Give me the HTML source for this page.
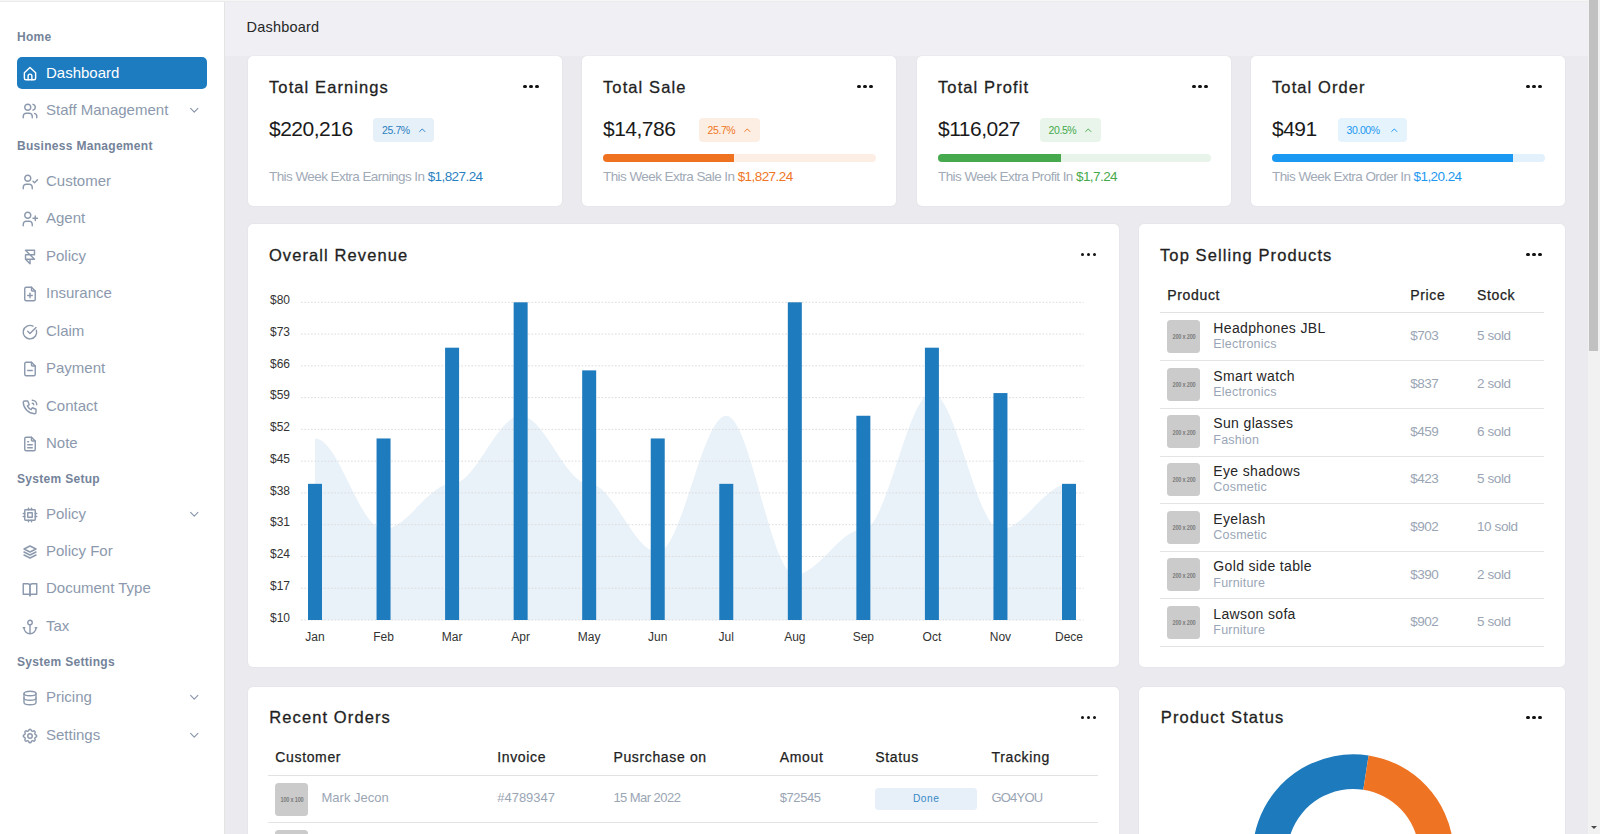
<!DOCTYPE html><html><head><meta charset="utf-8"><style>
html,body{margin:0;padding:0;width:1600px;height:834px;overflow:hidden;background:#eaeaef;font-family:"Liberation Sans",sans-serif;}
.t{position:absolute;white-space:nowrap;}
.b{position:absolute;}
.ic{position:absolute;overflow:visible;}
</style></head><body>
<div class="b" style="left:0px;top:0px;width:225px;height:834px;background:#ffffff;border-radius:0px;border-right:1px solid #e4e4e4;box-sizing:border-box;"></div>
<div class="b" style="left:225px;top:0px;width:1363px;height:56px;background:#efeff4;border-radius:0px;"></div>
<div class="b" style="left:0px;top:0px;width:1588px;height:1px;background:#f6f6f6;border-radius:0px;"></div>
<div class="b" style="left:0px;top:1px;width:1588px;height:1px;background:#ebebeb;border-radius:0px;"></div>
<div class="t" style="left:17px;top:31.30px;font-size:12px;line-height:12px;color:#74839a;font-weight:700;letter-spacing:0.3px;">Home</div>
<div class="b" style="left:17px;top:57.3px;width:190.3px;height:31.3px;background:#1d7bbf;border-radius:5px;"></div>
<svg class="ic" style="left:20.80px;top:64.90px;width:18px;height:18px" viewBox="0 0 24 24" fill="none" stroke="#ffffff" stroke-width="1.9" stroke-linecap="round" stroke-linejoin="round"><g transform="translate(0,-1.3)"><path d="M4.5 11.5L12 4.5l7.5 7v7.5a2 2 0 0 1 -2 2h-11a2 2 0 0 1 -2 -2z"/><path d="M9.5 21v-5a2.5 2.5 0 0 1 5 0v5"/></g></svg>
<div class="t" style="left:46px;top:65.05px;font-size:15px;line-height:15px;color:#ffffff;">Dashboard</div>
<svg class="ic" style="left:20.80px;top:102.10px;width:18px;height:18px" viewBox="0 0 24 24" fill="none" stroke="#8c99ad" stroke-width="1.9" stroke-linecap="round" stroke-linejoin="round"><circle cx="9" cy="7" r="4"/><path d="M3 21v-2a4 4 0 0 1 4 -4h4a4 4 0 0 1 4 4v2"/><path d="M16 3.13a4 4 0 0 1 0 7.75"/><path d="M21 21v-2a4 4 0 0 0 -3 -3.85"/></svg>
<div class="t" style="left:46px;top:102.25px;font-size:15px;line-height:15px;color:#8c99ad;">Staff Management</div>
<svg class="ic" style="left:187.15px;top:103.45px;width:14.5px;height:14.5px" viewBox="0 0 24 24" fill="none" stroke="#8c99ad" stroke-width="2.0" stroke-linecap="round" stroke-linejoin="round"><path d="M6 9l6 6l6 -6"/></svg>
<div class="t" style="left:17px;top:139.80px;font-size:12px;line-height:12px;color:#74839a;font-weight:700;letter-spacing:0.3px;">Business Management</div>
<svg class="ic" style="left:20.80px;top:172.70px;width:18px;height:18px" viewBox="0 0 24 24" fill="none" stroke="#8c99ad" stroke-width="1.9" stroke-linecap="round" stroke-linejoin="round"><circle cx="9" cy="7" r="4"/><path d="M3 21v-2a4 4 0 0 1 4 -4h4a4 4 0 0 1 4 4v2"/><path d="M16 11l2 2l4 -4"/></svg>
<div class="t" style="left:46px;top:172.85px;font-size:15px;line-height:15px;color:#8c99ad;">Customer</div>
<svg class="ic" style="left:20.80px;top:210.10px;width:18px;height:18px" viewBox="0 0 24 24" fill="none" stroke="#8c99ad" stroke-width="1.9" stroke-linecap="round" stroke-linejoin="round"><circle cx="9" cy="7" r="4"/><path d="M3 21v-2a4 4 0 0 1 4 -4h4a4 4 0 0 1 4 4v2"/><path d="M16 11h6m-3 -3v6"/></svg>
<div class="t" style="left:46px;top:210.25px;font-size:15px;line-height:15px;color:#8c99ad;">Agent</div>
<svg class="ic" style="left:20.80px;top:247.60px;width:18px;height:18px" viewBox="0 0 24 24" fill="none" stroke="#8c99ad" stroke-width="1.9" stroke-linecap="round" stroke-linejoin="round"><path d="M6 15h12l-12 -12h12v6h-12v6l6 6v-6"/></svg>
<div class="t" style="left:46px;top:247.75px;font-size:15px;line-height:15px;color:#8c99ad;">Policy</div>
<svg class="ic" style="left:20.80px;top:285.10px;width:18px;height:18px" viewBox="0 0 24 24" fill="none" stroke="#8c99ad" stroke-width="1.9" stroke-linecap="round" stroke-linejoin="round"><path d="M14 3v4a1 1 0 0 0 1 1h4"/><path d="M17 21h-10a2 2 0 0 1 -2 -2v-14a2 2 0 0 1 2 -2h7l5 5v11a2 2 0 0 1 -2 2z"/><path d="M12 11l0 6"/><path d="M9 14l6 0"/></svg>
<div class="t" style="left:46px;top:285.25px;font-size:15px;line-height:15px;color:#8c99ad;">Insurance</div>
<svg class="ic" style="left:20.80px;top:322.60px;width:18px;height:18px" viewBox="0 0 24 24" fill="none" stroke="#8c99ad" stroke-width="1.9" stroke-linecap="round" stroke-linejoin="round"><path d="M20.5 9.5A9 9 0 1 1 16 4.2"/><path d="M9 11l3 3l8 -8"/></svg>
<div class="t" style="left:46px;top:322.75px;font-size:15px;line-height:15px;color:#8c99ad;">Claim</div>
<svg class="ic" style="left:20.80px;top:360.10px;width:18px;height:18px" viewBox="0 0 24 24" fill="none" stroke="#8c99ad" stroke-width="1.9" stroke-linecap="round" stroke-linejoin="round"><path d="M14 3v4a1 1 0 0 0 1 1h4"/><path d="M17 21h-10a2 2 0 0 1 -2 -2v-14a2 2 0 0 1 2 -2h7l5 5v11a2 2 0 0 1 -2 2z"/><path d="M9 14l6 0"/></svg>
<div class="t" style="left:46px;top:360.25px;font-size:15px;line-height:15px;color:#8c99ad;">Payment</div>
<svg class="ic" style="left:20.80px;top:397.60px;width:18px;height:18px" viewBox="0 0 24 24" fill="none" stroke="#8c99ad" stroke-width="1.9" stroke-linecap="round" stroke-linejoin="round"><path d="M5 4h4l2 5l-2.5 1.5a11 11 0 0 0 5 5l1.5 -2.5l5 2v4a2 2 0 0 1 -2 2a16 16 0 0 1 -15 -15a2 2 0 0 1 2 -2"/><path d="M15 7a2 2 0 0 1 2 2"/><path d="M15 3a6 6 0 0 1 6 6"/></svg>
<div class="t" style="left:46px;top:397.75px;font-size:15px;line-height:15px;color:#8c99ad;">Contact</div>
<svg class="ic" style="left:20.80px;top:435.10px;width:18px;height:18px" viewBox="0 0 24 24" fill="none" stroke="#8c99ad" stroke-width="1.9" stroke-linecap="round" stroke-linejoin="round"><path d="M14 3v4a1 1 0 0 0 1 1h4"/><path d="M17 21h-10a2 2 0 0 1 -2 -2v-14a2 2 0 0 1 2 -2h7l5 5v11a2 2 0 0 1 -2 2z"/><path d="M9 9l1 0"/><path d="M9 13l6 0"/><path d="M9 17l6 0"/></svg>
<div class="t" style="left:46px;top:435.25px;font-size:15px;line-height:15px;color:#8c99ad;">Note</div>
<div class="t" style="left:17px;top:473.00px;font-size:12px;line-height:12px;color:#74839a;font-weight:700;letter-spacing:0.3px;">System Setup</div>
<svg class="ic" style="left:20.80px;top:505.50px;width:18px;height:18px" viewBox="0 0 24 24" fill="none" stroke="#8c99ad" stroke-width="1.9" stroke-linecap="round" stroke-linejoin="round"><rect x="5" y="5" width="14" height="14" rx="1"/><path d="M9 9h6v6h-6z"/><path d="M3 10h2"/><path d="M3 14h2"/><path d="M10 3v2"/><path d="M14 3v2"/><path d="M21 10h-2"/><path d="M21 14h-2"/><path d="M14 21v-2"/><path d="M10 21v-2"/></svg>
<div class="t" style="left:46px;top:505.65px;font-size:15px;line-height:15px;color:#8c99ad;">Policy</div>
<svg class="ic" style="left:187.15px;top:506.85px;width:14.5px;height:14.5px" viewBox="0 0 24 24" fill="none" stroke="#8c99ad" stroke-width="2.0" stroke-linecap="round" stroke-linejoin="round"><path d="M6 9l6 6l6 -6"/></svg>
<svg class="ic" style="left:20.80px;top:543.10px;width:18px;height:18px" viewBox="0 0 24 24" fill="none" stroke="#8c99ad" stroke-width="1.9" stroke-linecap="round" stroke-linejoin="round"><path d="M12 4l-8 4l8 4l8 -4l-8 -4"/><path d="M4 12l8 4l8 -4"/><path d="M4 16l8 4l8 -4"/></svg>
<div class="t" style="left:46px;top:543.25px;font-size:15px;line-height:15px;color:#8c99ad;">Policy For</div>
<svg class="ic" style="left:20.80px;top:580.30px;width:18px;height:18px" viewBox="0 0 24 24" fill="none" stroke="#8c99ad" stroke-width="1.9" stroke-linecap="round" stroke-linejoin="round"><path d="M3 5h6a3 3 0 0 1 3 3v13a2 2 0 0 0 -2 -2h-7z"/><path d="M21 5h-6a3 3 0 0 0 -3 3v13a2 2 0 0 1 2 -2h7z"/></svg>
<div class="t" style="left:46px;top:580.45px;font-size:15px;line-height:15px;color:#8c99ad;">Document Type</div>
<svg class="ic" style="left:20.80px;top:618.10px;width:18px;height:18px" viewBox="0 0 24 24" fill="none" stroke="#8c99ad" stroke-width="1.9" stroke-linecap="round" stroke-linejoin="round"><path d="M12 9v12m-8 -8a8 8 0 0 0 16 0m1 0h-2m-14 0h-2"/><circle cx="12" cy="6" r="3"/></svg>
<div class="t" style="left:46px;top:618.25px;font-size:15px;line-height:15px;color:#8c99ad;">Tax</div>
<div class="t" style="left:17px;top:655.60px;font-size:12px;line-height:12px;color:#74839a;font-weight:700;letter-spacing:0.3px;">System Settings</div>
<svg class="ic" style="left:20.80px;top:689.10px;width:18px;height:18px" viewBox="0 0 24 24" fill="none" stroke="#8c99ad" stroke-width="1.9" stroke-linecap="round" stroke-linejoin="round"><ellipse cx="12" cy="6" rx="8" ry="3"/><path d="M4 6v6a8 3 0 0 0 16 0v-6"/><path d="M4 12v6a8 3 0 0 0 16 0v-6"/></svg>
<div class="t" style="left:46px;top:689.25px;font-size:15px;line-height:15px;color:#8c99ad;">Pricing</div>
<svg class="ic" style="left:187.15px;top:690.45px;width:14.5px;height:14.5px" viewBox="0 0 24 24" fill="none" stroke="#8c99ad" stroke-width="2.0" stroke-linecap="round" stroke-linejoin="round"><path d="M6 9l6 6l6 -6"/></svg>
<svg class="ic" style="left:20.80px;top:726.70px;width:18px;height:18px" viewBox="0 0 24 24" fill="none" stroke="#8c99ad" stroke-width="1.9" stroke-linecap="round" stroke-linejoin="round"><path d="M10.325 4.317c.426 -1.756 2.924 -1.756 3.35 0a1.724 1.724 0 0 0 2.573 1.066c1.543 -.94 3.31 .826 2.37 2.37a1.724 1.724 0 0 0 1.065 2.572c1.756 .426 1.756 2.924 0 3.35a1.724 1.724 0 0 0 -1.066 2.573c.94 1.543 -.826 3.31 -2.37 2.37a1.724 1.724 0 0 0 -2.572 1.065c-.426 1.756 -2.924 1.756 -3.35 0a1.724 1.724 0 0 0 -2.573 -1.066c-1.543 .94 -3.31 -.826 -2.37 -2.37a1.724 1.724 0 0 0 -1.065 -2.572c-1.756 -.426 -1.756 -2.924 0 -3.35a1.724 1.724 0 0 0 1.066 -2.573c-.94 -1.543 .826 -3.31 2.37 -2.37c1 .608 2.296 .07 2.572 -1.065z"/><circle cx="12" cy="12" r="3"/></svg>
<div class="t" style="left:46px;top:726.85px;font-size:15px;line-height:15px;color:#8c99ad;">Settings</div>
<svg class="ic" style="left:187.15px;top:728.05px;width:14.5px;height:14.5px" viewBox="0 0 24 24" fill="none" stroke="#8c99ad" stroke-width="2.0" stroke-linecap="round" stroke-linejoin="round"><path d="M6 9l6 6l6 -6"/></svg>
<div class="t" style="left:246.5px;top:20.07px;font-size:14.5px;line-height:14.5px;color:#262626;letter-spacing:0.2px;">Dashboard</div>
<div class="b" style="left:248px;top:56px;width:314px;height:150px;background:#ffffff;border-radius:5px;box-shadow:0 0 1.5px rgba(40,40,80,0.09);"></div>
<div class="t" style="left:269px;top:78.57px;font-size:16.5px;line-height:16.5px;color:#1f1f1f;letter-spacing:1.1px;-webkit-text-stroke:0.3px #1f1f1f;">Total Earnings</div>
<div class="b" style="left:523.40px;top:84.90px;width:3.4px;height:3.4px;border-radius:50%;background:#111"></div>
<div class="b" style="left:529.30px;top:84.90px;width:3.4px;height:3.4px;border-radius:50%;background:#111"></div>
<div class="b" style="left:535.20px;top:84.90px;width:3.4px;height:3.4px;border-radius:50%;background:#111"></div>
<div class="t" style="left:269px;top:118.05px;font-size:21px;line-height:21px;color:#1a1a1a;letter-spacing:-0.5px;">$220,216</div>
<div class="b" style="left:373px;top:118.1px;width:61px;height:23.5px;background:#e6f0f8;border-radius:4px;"></div>
<div class="t" style="left:382px;top:125.08px;font-size:10.5px;line-height:10.5px;color:#2a7fc1;letter-spacing:-0.4px;">25.7%</div>
<svg class="ic" style="left:416.95px;top:125.35px;width:10.5px;height:10.5px" viewBox="0 0 24 24" fill="none" stroke="#2a7fc1" stroke-width="2.2" stroke-linecap="round" stroke-linejoin="round"><path d="M6 15l6 -6l6 6"/></svg>
<div class="t" style="left:269px;top:170.33px;font-size:13.5px;line-height:13.5px;color:#2a7fc1;letter-spacing:-0.57px;"><span style="color:#a1aab7">This Week Extra Earnings In </span>$1,827.24</div>
<div class="b" style="left:582px;top:56px;width:314px;height:150px;background:#ffffff;border-radius:5px;box-shadow:0 0 1.5px rgba(40,40,80,0.09);"></div>
<div class="t" style="left:603px;top:78.57px;font-size:16.5px;line-height:16.5px;color:#1f1f1f;letter-spacing:1.1px;-webkit-text-stroke:0.3px #1f1f1f;">Total Sale</div>
<div class="b" style="left:857.40px;top:84.90px;width:3.4px;height:3.4px;border-radius:50%;background:#111"></div>
<div class="b" style="left:863.30px;top:84.90px;width:3.4px;height:3.4px;border-radius:50%;background:#111"></div>
<div class="b" style="left:869.20px;top:84.90px;width:3.4px;height:3.4px;border-radius:50%;background:#111"></div>
<div class="t" style="left:603px;top:118.05px;font-size:21px;line-height:21px;color:#1a1a1a;letter-spacing:-0.5px;">$14,786</div>
<div class="b" style="left:698.5px;top:118.1px;width:61px;height:23.5px;background:#fdeee3;border-radius:4px;"></div>
<div class="t" style="left:707.5px;top:125.08px;font-size:10.5px;line-height:10.5px;color:#ee7624;letter-spacing:-0.4px;">25.7%</div>
<svg class="ic" style="left:742.45px;top:125.35px;width:10.5px;height:10.5px" viewBox="0 0 24 24" fill="none" stroke="#ee7624" stroke-width="2.2" stroke-linecap="round" stroke-linejoin="round"><path d="M6 15l6 -6l6 6"/></svg>
<div class="b" style="left:603px;top:154.2px;width:273px;height:8.3px;background:#fdeee5;border-radius:4.2px;"></div>
<div class="b" style="left:603px;top:154.2px;width:131.04px;height:8.3px;background:#ee7220;border-radius:0px;border-radius:4.2px 0 0 4.2px;"></div>
<div class="t" style="left:603px;top:170.33px;font-size:13.5px;line-height:13.5px;color:#ee7624;letter-spacing:-0.57px;"><span style="color:#a1aab7">This Week Extra Sale In </span>$1,827.24</div>
<div class="b" style="left:917px;top:56px;width:314px;height:150px;background:#ffffff;border-radius:5px;box-shadow:0 0 1.5px rgba(40,40,80,0.09);"></div>
<div class="t" style="left:938px;top:78.57px;font-size:16.5px;line-height:16.5px;color:#1f1f1f;letter-spacing:1.1px;-webkit-text-stroke:0.3px #1f1f1f;">Total Profit</div>
<div class="b" style="left:1192.40px;top:84.90px;width:3.4px;height:3.4px;border-radius:50%;background:#111"></div>
<div class="b" style="left:1198.30px;top:84.90px;width:3.4px;height:3.4px;border-radius:50%;background:#111"></div>
<div class="b" style="left:1204.20px;top:84.90px;width:3.4px;height:3.4px;border-radius:50%;background:#111"></div>
<div class="t" style="left:938px;top:118.05px;font-size:21px;line-height:21px;color:#1a1a1a;letter-spacing:-0.5px;">$116,027</div>
<div class="b" style="left:1039.5px;top:118.1px;width:61px;height:23.5px;background:#e9f5ea;border-radius:4px;"></div>
<div class="t" style="left:1048.5px;top:125.08px;font-size:10.5px;line-height:10.5px;color:#45a84b;letter-spacing:-0.4px;">20.5%</div>
<svg class="ic" style="left:1083.45px;top:125.35px;width:10.5px;height:10.5px" viewBox="0 0 24 24" fill="none" stroke="#45a84b" stroke-width="2.2" stroke-linecap="round" stroke-linejoin="round"><path d="M6 15l6 -6l6 6"/></svg>
<div class="b" style="left:938px;top:154.2px;width:273px;height:8.3px;background:#e8f4e9;border-radius:4.2px;"></div>
<div class="b" style="left:938px;top:154.2px;width:122.85000000000001px;height:8.3px;background:#47a94d;border-radius:0px;border-radius:4.2px 0 0 4.2px;"></div>
<div class="t" style="left:938px;top:170.33px;font-size:13.5px;line-height:13.5px;color:#45a84b;letter-spacing:-0.57px;"><span style="color:#a1aab7">This Week Extra Profit In </span>$1,7.24</div>
<div class="b" style="left:1251px;top:56px;width:314px;height:150px;background:#ffffff;border-radius:5px;box-shadow:0 0 1.5px rgba(40,40,80,0.09);"></div>
<div class="t" style="left:1272px;top:78.57px;font-size:16.5px;line-height:16.5px;color:#1f1f1f;letter-spacing:1.1px;-webkit-text-stroke:0.3px #1f1f1f;">Total Order</div>
<div class="b" style="left:1526.40px;top:84.90px;width:3.4px;height:3.4px;border-radius:50%;background:#111"></div>
<div class="b" style="left:1532.30px;top:84.90px;width:3.4px;height:3.4px;border-radius:50%;background:#111"></div>
<div class="b" style="left:1538.20px;top:84.90px;width:3.4px;height:3.4px;border-radius:50%;background:#111"></div>
<div class="t" style="left:1272px;top:118.05px;font-size:21px;line-height:21px;color:#1a1a1a;letter-spacing:-0.5px;">$491</div>
<div class="b" style="left:1337.5px;top:118.1px;width:69px;height:23.5px;background:#e5f3fd;border-radius:4px;"></div>
<div class="t" style="left:1346.5px;top:125.08px;font-size:10.5px;line-height:10.5px;color:#1d98f0;letter-spacing:-0.4px;">30.00%</div>
<svg class="ic" style="left:1389.45px;top:125.35px;width:10.5px;height:10.5px" viewBox="0 0 24 24" fill="none" stroke="#1d98f0" stroke-width="2.2" stroke-linecap="round" stroke-linejoin="round"><path d="M6 15l6 -6l6 6"/></svg>
<div class="b" style="left:1272px;top:154.2px;width:273px;height:8.3px;background:#e3f1fc;border-radius:4.2px;"></div>
<div class="b" style="left:1272px;top:154.2px;width:240.786px;height:8.3px;background:#1a98f2;border-radius:0px;border-radius:4.2px 0 0 4.2px;"></div>
<div class="t" style="left:1272px;top:170.33px;font-size:13.5px;line-height:13.5px;color:#1d98f0;letter-spacing:-0.57px;"><span style="color:#a1aab7">This Week Extra Order In </span>$1,20.24</div>
<div class="b" style="left:248px;top:224px;width:871px;height:442.5px;background:#ffffff;border-radius:5px;box-shadow:0 0 1.5px rgba(40,40,80,0.09);"></div>
<div class="t" style="left:268.9px;top:246.97px;font-size:16.5px;line-height:16.5px;color:#1f1f1f;letter-spacing:1.1px;-webkit-text-stroke:0.3px #1f1f1f;">Overall Revenue</div>
<div class="b" style="left:1080.70px;top:252.90px;width:3.4px;height:3.4px;border-radius:50%;background:#111"></div>
<div class="b" style="left:1086.60px;top:252.90px;width:3.4px;height:3.4px;border-radius:50%;background:#111"></div>
<div class="b" style="left:1092.50px;top:252.90px;width:3.4px;height:3.4px;border-radius:50%;background:#111"></div>
<svg style="position:absolute;left:0;top:0" width="1600" height="834"><path d="M315.00,620.00 L315.00,438.46 C338.99,438.46 359.55,529.23 383.55,529.23 C407.54,529.23 428.10,483.84 452.09,483.84 C476.08,483.84 496.65,415.76 520.64,415.76 C544.63,415.76 565.19,483.84 589.18,483.84 C613.17,483.84 633.74,551.92 657.73,551.92 C681.72,551.92 702.28,415.76 726.27,415.76 C750.26,415.76 770.83,574.61 794.82,574.61 C818.81,574.61 839.37,529.23 863.36,529.23 C887.35,529.23 907.92,393.07 931.91,393.07 C955.90,393.07 976.46,529.23 1000.45,529.23 C1024.45,529.23 1045.01,483.84 1069.00,483.84 L1069.00,620.00 Z" fill="#eaf2f9"/><line x1="301" y1="620.00" x2="1083.5" y2="620.00" stroke="#dcdcdc" stroke-width="1" stroke-dasharray="1.67 1.67"/><line x1="301" y1="588.23" x2="1083.5" y2="588.23" stroke="#dcdcdc" stroke-width="1" stroke-dasharray="1.67 1.67"/><line x1="301" y1="556.46" x2="1083.5" y2="556.46" stroke="#dcdcdc" stroke-width="1" stroke-dasharray="1.67 1.67"/><line x1="301" y1="524.69" x2="1083.5" y2="524.69" stroke="#dcdcdc" stroke-width="1" stroke-dasharray="1.67 1.67"/><line x1="301" y1="492.92" x2="1083.5" y2="492.92" stroke="#dcdcdc" stroke-width="1" stroke-dasharray="1.67 1.67"/><line x1="301" y1="461.15" x2="1083.5" y2="461.15" stroke="#dcdcdc" stroke-width="1" stroke-dasharray="1.67 1.67"/><line x1="301" y1="429.38" x2="1083.5" y2="429.38" stroke="#dcdcdc" stroke-width="1" stroke-dasharray="1.67 1.67"/><line x1="301" y1="397.61" x2="1083.5" y2="397.61" stroke="#dcdcdc" stroke-width="1" stroke-dasharray="1.67 1.67"/><line x1="301" y1="365.84" x2="1083.5" y2="365.84" stroke="#dcdcdc" stroke-width="1" stroke-dasharray="1.67 1.67"/><line x1="301" y1="334.07" x2="1083.5" y2="334.07" stroke="#dcdcdc" stroke-width="1" stroke-dasharray="1.67 1.67"/><line x1="301" y1="302.30" x2="1083.5" y2="302.30" stroke="#dcdcdc" stroke-width="1" stroke-dasharray="1.67 1.67"/><rect x="308.00" y="483.84" width="14" height="136.16" fill="#1e7bbd"/><rect x="376.55" y="438.46" width="14" height="181.54" fill="#1e7bbd"/><rect x="445.09" y="347.69" width="14" height="272.31" fill="#1e7bbd"/><rect x="513.64" y="302.30" width="14" height="317.70" fill="#1e7bbd"/><rect x="582.18" y="370.38" width="14" height="249.62" fill="#1e7bbd"/><rect x="650.73" y="438.46" width="14" height="181.54" fill="#1e7bbd"/><rect x="719.27" y="483.84" width="14" height="136.16" fill="#1e7bbd"/><rect x="787.82" y="302.30" width="14" height="317.70" fill="#1e7bbd"/><rect x="856.36" y="415.76" width="14" height="204.24" fill="#1e7bbd"/><rect x="924.91" y="347.69" width="14" height="272.31" fill="#1e7bbd"/><rect x="993.45" y="393.07" width="14" height="226.93" fill="#1e7bbd"/><rect x="1062.00" y="483.84" width="14" height="136.16" fill="#1e7bbd"/></svg>
<div class="t" style="left:270px;top:611.80px;font-size:12px;line-height:12px;color:#333333;">$10</div>
<div class="t" style="left:270px;top:580.03px;font-size:12px;line-height:12px;color:#333333;">$17</div>
<div class="t" style="left:270px;top:548.26px;font-size:12px;line-height:12px;color:#333333;">$24</div>
<div class="t" style="left:270px;top:516.49px;font-size:12px;line-height:12px;color:#333333;">$31</div>
<div class="t" style="left:270px;top:484.72px;font-size:12px;line-height:12px;color:#333333;">$38</div>
<div class="t" style="left:270px;top:452.95px;font-size:12px;line-height:12px;color:#333333;">$45</div>
<div class="t" style="left:270px;top:421.18px;font-size:12px;line-height:12px;color:#333333;">$52</div>
<div class="t" style="left:270px;top:389.41px;font-size:12px;line-height:12px;color:#333333;">$59</div>
<div class="t" style="left:270px;top:357.64px;font-size:12px;line-height:12px;color:#333333;">$66</div>
<div class="t" style="left:270px;top:325.87px;font-size:12px;line-height:12px;color:#333333;">$73</div>
<div class="t" style="left:270px;top:294.10px;font-size:12px;line-height:12px;color:#333333;">$80</div>
<div class="t" style="left:285.0px;width:60px;text-align:center;top:630.50px;font-size:12px;line-height:12px;color:#333333;">Jan</div>
<div class="t" style="left:353.54545454545456px;width:60px;text-align:center;top:630.50px;font-size:12px;line-height:12px;color:#333333;">Feb</div>
<div class="t" style="left:422.0909090909091px;width:60px;text-align:center;top:630.50px;font-size:12px;line-height:12px;color:#333333;">Mar</div>
<div class="t" style="left:490.6363636363636px;width:60px;text-align:center;top:630.50px;font-size:12px;line-height:12px;color:#333333;">Apr</div>
<div class="t" style="left:559.1818181818182px;width:60px;text-align:center;top:630.50px;font-size:12px;line-height:12px;color:#333333;">May</div>
<div class="t" style="left:627.7272727272727px;width:60px;text-align:center;top:630.50px;font-size:12px;line-height:12px;color:#333333;">Jun</div>
<div class="t" style="left:696.2727272727273px;width:60px;text-align:center;top:630.50px;font-size:12px;line-height:12px;color:#333333;">Jul</div>
<div class="t" style="left:764.8181818181818px;width:60px;text-align:center;top:630.50px;font-size:12px;line-height:12px;color:#333333;">Aug</div>
<div class="t" style="left:833.3636363636364px;width:60px;text-align:center;top:630.50px;font-size:12px;line-height:12px;color:#333333;">Sep</div>
<div class="t" style="left:901.9090909090909px;width:60px;text-align:center;top:630.50px;font-size:12px;line-height:12px;color:#333333;">Oct</div>
<div class="t" style="left:970.4545454545455px;width:60px;text-align:center;top:630.50px;font-size:12px;line-height:12px;color:#333333;">Nov</div>
<div class="t" style="left:1039.0px;width:60px;text-align:center;top:630.50px;font-size:12px;line-height:12px;color:#333333;">Dece</div>
<div class="b" style="left:1139px;top:224px;width:426px;height:442.5px;background:#ffffff;border-radius:5px;box-shadow:0 0 1.5px rgba(40,40,80,0.09);"></div>
<div class="t" style="left:1160px;top:246.97px;font-size:16.5px;line-height:16.5px;color:#1f1f1f;letter-spacing:1.1px;-webkit-text-stroke:0.3px #1f1f1f;">Top Selling Products</div>
<div class="b" style="left:1526.40px;top:252.90px;width:3.4px;height:3.4px;border-radius:50%;background:#111"></div>
<div class="b" style="left:1532.30px;top:252.90px;width:3.4px;height:3.4px;border-radius:50%;background:#111"></div>
<div class="b" style="left:1538.20px;top:252.90px;width:3.4px;height:3.4px;border-radius:50%;background:#111"></div>
<div class="t" style="left:1167.3px;top:287.80px;font-size:14px;line-height:14px;color:#222;letter-spacing:0.65px;-webkit-text-stroke:0.25px #222;">Product</div>
<div class="t" style="left:1410.3px;top:287.80px;font-size:14px;line-height:14px;color:#222;letter-spacing:0.65px;-webkit-text-stroke:0.25px #222;">Price</div>
<div class="t" style="left:1477px;top:287.80px;font-size:14px;line-height:14px;color:#222;letter-spacing:0.65px;-webkit-text-stroke:0.25px #222;">Stock</div>
<div class="b" style="left:1160px;top:312px;width:384px;height:1px;background:#e2e2e2;border-radius:0px;"></div>
<div class="b" style="left:1167px;top:320.0px;width:33px;height:33px;background:#cbcbcb;border-radius:3.5px;"></div>
<div class="t" style="left:1163.5px;width:40px;text-align:center;top:333.38px;font-size:7.2px;line-height:7.2px;color:#7c7c7c;font-weight:700;letter-spacing:-0.3px;transform:scaleX(0.78);">200 x 200</div>
<div class="t" style="left:1213.3px;top:320.90px;font-size:14px;line-height:14px;color:#262626;letter-spacing:0.35px;">Headphones JBL</div>
<div class="t" style="left:1213.3px;top:338.38px;font-size:12.5px;line-height:12.5px;color:#9aa6b6;letter-spacing:0.2px;">Electronics</div>
<div class="t" style="left:1410.3px;top:329.32px;font-size:13.5px;line-height:13.5px;color:#9aa5b4;letter-spacing:-0.5px;">$703</div>
<div class="t" style="left:1477px;top:329.32px;font-size:13.5px;line-height:13.5px;color:#9aa5b4;letter-spacing:-0.4px;">5 sold</div>
<div class="b" style="left:1160px;top:360px;width:384px;height:1px;background:#e4e4e4;border-radius:0px;"></div>
<div class="b" style="left:1167px;top:367.65px;width:33px;height:33px;background:#cbcbcb;border-radius:3.5px;"></div>
<div class="t" style="left:1163.5px;width:40px;text-align:center;top:381.03px;font-size:7.2px;line-height:7.2px;color:#7c7c7c;font-weight:700;letter-spacing:-0.3px;transform:scaleX(0.78);">200 x 200</div>
<div class="t" style="left:1213.3px;top:368.55px;font-size:14px;line-height:14px;color:#262626;letter-spacing:0.35px;">Smart watch</div>
<div class="t" style="left:1213.3px;top:386.02px;font-size:12.5px;line-height:12.5px;color:#9aa6b6;letter-spacing:0.2px;">Electronics</div>
<div class="t" style="left:1410.3px;top:376.97px;font-size:13.5px;line-height:13.5px;color:#9aa5b4;letter-spacing:-0.5px;">$837</div>
<div class="t" style="left:1477px;top:376.97px;font-size:13.5px;line-height:13.5px;color:#9aa5b4;letter-spacing:-0.4px;">2 sold</div>
<div class="b" style="left:1160px;top:408px;width:384px;height:1px;background:#e4e4e4;border-radius:0px;"></div>
<div class="b" style="left:1167px;top:415.3px;width:33px;height:33px;background:#cbcbcb;border-radius:3.5px;"></div>
<div class="t" style="left:1163.5px;width:40px;text-align:center;top:428.68px;font-size:7.2px;line-height:7.2px;color:#7c7c7c;font-weight:700;letter-spacing:-0.3px;transform:scaleX(0.78);">200 x 200</div>
<div class="t" style="left:1213.3px;top:416.20px;font-size:14px;line-height:14px;color:#262626;letter-spacing:0.35px;">Sun glasses</div>
<div class="t" style="left:1213.3px;top:433.68px;font-size:12.5px;line-height:12.5px;color:#9aa6b6;letter-spacing:0.2px;">Fashion</div>
<div class="t" style="left:1410.3px;top:424.62px;font-size:13.5px;line-height:13.5px;color:#9aa5b4;letter-spacing:-0.5px;">$459</div>
<div class="t" style="left:1477px;top:424.62px;font-size:13.5px;line-height:13.5px;color:#9aa5b4;letter-spacing:-0.4px;">6 sold</div>
<div class="b" style="left:1160px;top:456px;width:384px;height:1px;background:#e4e4e4;border-radius:0px;"></div>
<div class="b" style="left:1167px;top:462.95px;width:33px;height:33px;background:#cbcbcb;border-radius:3.5px;"></div>
<div class="t" style="left:1163.5px;width:40px;text-align:center;top:476.33px;font-size:7.2px;line-height:7.2px;color:#7c7c7c;font-weight:700;letter-spacing:-0.3px;transform:scaleX(0.78);">200 x 200</div>
<div class="t" style="left:1213.3px;top:463.85px;font-size:14px;line-height:14px;color:#262626;letter-spacing:0.35px;">Eye shadows</div>
<div class="t" style="left:1213.3px;top:481.32px;font-size:12.5px;line-height:12.5px;color:#9aa6b6;letter-spacing:0.2px;">Cosmetic</div>
<div class="t" style="left:1410.3px;top:472.27px;font-size:13.5px;line-height:13.5px;color:#9aa5b4;letter-spacing:-0.5px;">$423</div>
<div class="t" style="left:1477px;top:472.27px;font-size:13.5px;line-height:13.5px;color:#9aa5b4;letter-spacing:-0.4px;">5 sold</div>
<div class="b" style="left:1160px;top:503px;width:384px;height:1px;background:#e4e4e4;border-radius:0px;"></div>
<div class="b" style="left:1167px;top:510.6px;width:33px;height:33px;background:#cbcbcb;border-radius:3.5px;"></div>
<div class="t" style="left:1163.5px;width:40px;text-align:center;top:523.98px;font-size:7.2px;line-height:7.2px;color:#7c7c7c;font-weight:700;letter-spacing:-0.3px;transform:scaleX(0.78);">200 x 200</div>
<div class="t" style="left:1213.3px;top:511.50px;font-size:14px;line-height:14px;color:#262626;letter-spacing:0.35px;">Eyelash</div>
<div class="t" style="left:1213.3px;top:528.98px;font-size:12.5px;line-height:12.5px;color:#9aa6b6;letter-spacing:0.2px;">Cosmetic</div>
<div class="t" style="left:1410.3px;top:519.92px;font-size:13.5px;line-height:13.5px;color:#9aa5b4;letter-spacing:-0.5px;">$902</div>
<div class="t" style="left:1477px;top:519.92px;font-size:13.5px;line-height:13.5px;color:#9aa5b4;letter-spacing:-0.4px;">10 sold</div>
<div class="b" style="left:1160px;top:551px;width:384px;height:1px;background:#e4e4e4;border-radius:0px;"></div>
<div class="b" style="left:1167px;top:558.25px;width:33px;height:33px;background:#cbcbcb;border-radius:3.5px;"></div>
<div class="t" style="left:1163.5px;width:40px;text-align:center;top:571.63px;font-size:7.2px;line-height:7.2px;color:#7c7c7c;font-weight:700;letter-spacing:-0.3px;transform:scaleX(0.78);">200 x 200</div>
<div class="t" style="left:1213.3px;top:559.15px;font-size:14px;line-height:14px;color:#262626;letter-spacing:0.35px;">Gold side table</div>
<div class="t" style="left:1213.3px;top:576.62px;font-size:12.5px;line-height:12.5px;color:#9aa6b6;letter-spacing:0.2px;">Furniture</div>
<div class="t" style="left:1410.3px;top:567.57px;font-size:13.5px;line-height:13.5px;color:#9aa5b4;letter-spacing:-0.5px;">$390</div>
<div class="t" style="left:1477px;top:567.57px;font-size:13.5px;line-height:13.5px;color:#9aa5b4;letter-spacing:-0.4px;">2 sold</div>
<div class="b" style="left:1160px;top:598px;width:384px;height:1px;background:#e4e4e4;border-radius:0px;"></div>
<div class="b" style="left:1167px;top:605.9px;width:33px;height:33px;background:#cbcbcb;border-radius:3.5px;"></div>
<div class="t" style="left:1163.5px;width:40px;text-align:center;top:619.28px;font-size:7.2px;line-height:7.2px;color:#7c7c7c;font-weight:700;letter-spacing:-0.3px;transform:scaleX(0.78);">200 x 200</div>
<div class="t" style="left:1213.3px;top:606.80px;font-size:14px;line-height:14px;color:#262626;letter-spacing:0.35px;">Lawson sofa</div>
<div class="t" style="left:1213.3px;top:624.27px;font-size:12.5px;line-height:12.5px;color:#9aa6b6;letter-spacing:0.2px;">Furniture</div>
<div class="t" style="left:1410.3px;top:615.22px;font-size:13.5px;line-height:13.5px;color:#9aa5b4;letter-spacing:-0.5px;">$902</div>
<div class="t" style="left:1477px;top:615.22px;font-size:13.5px;line-height:13.5px;color:#9aa5b4;letter-spacing:-0.4px;">5 sold</div>
<div class="b" style="left:1160px;top:646px;width:384px;height:1px;background:#e4e4e4;border-radius:0px;"></div>
<div class="b" style="left:248px;top:686.5px;width:871px;height:200px;background:#ffffff;border-radius:5px;box-shadow:0 0 1.5px rgba(40,40,80,0.09);"></div>
<div class="t" style="left:269.3px;top:709.27px;font-size:16.5px;line-height:16.5px;color:#1f1f1f;letter-spacing:1.1px;-webkit-text-stroke:0.3px #1f1f1f;">Recent Orders</div>
<div class="b" style="left:1080.70px;top:715.50px;width:3.4px;height:3.4px;border-radius:50%;background:#111"></div>
<div class="b" style="left:1086.60px;top:715.50px;width:3.4px;height:3.4px;border-radius:50%;background:#111"></div>
<div class="b" style="left:1092.50px;top:715.50px;width:3.4px;height:3.4px;border-radius:50%;background:#111"></div>
<div class="t" style="left:275.3px;top:750.40px;font-size:14px;line-height:14px;color:#222;letter-spacing:0.65px;-webkit-text-stroke:0.25px #222;">Customer</div>
<div class="t" style="left:497.2px;top:750.40px;font-size:14px;line-height:14px;color:#222;letter-spacing:0.65px;-webkit-text-stroke:0.25px #222;">Invoice</div>
<div class="t" style="left:613.4px;top:750.40px;font-size:14px;line-height:14px;color:#222;letter-spacing:0.65px;-webkit-text-stroke:0.25px #222;">Pusrchase on</div>
<div class="t" style="left:779.8px;top:750.40px;font-size:14px;line-height:14px;color:#222;letter-spacing:0.65px;-webkit-text-stroke:0.25px #222;">Amout</div>
<div class="t" style="left:875.2px;top:750.40px;font-size:14px;line-height:14px;color:#222;letter-spacing:0.65px;-webkit-text-stroke:0.25px #222;">Status</div>
<div class="t" style="left:991.5px;top:750.40px;font-size:14px;line-height:14px;color:#222;letter-spacing:0.65px;-webkit-text-stroke:0.25px #222;">Tracking</div>
<div class="b" style="left:268px;top:775px;width:830px;height:1px;background:#e2e2e2;border-radius:0px;"></div>
<div class="b" style="left:275.3px;top:782.7px;width:33px;height:33px;background:#cbcbcb;border-radius:3.5px;"></div>
<div class="t" style="left:271.8px;width:40px;text-align:center;top:795.88px;font-size:7.2px;line-height:7.2px;color:#7c7c7c;font-weight:700;letter-spacing:-0.3px;transform:scaleX(0.78);">100 x 100</div>
<div class="t" style="left:321.5px;top:790.95px;font-size:13px;line-height:13px;color:#9aa5b4;">Mark Jecon</div>
<div class="t" style="left:497.2px;top:790.95px;font-size:13px;line-height:13px;color:#9aa5b4;">#4789347</div>
<div class="t" style="left:613.4px;top:790.95px;font-size:13px;line-height:13px;color:#9aa5b4;letter-spacing:-0.55px;">15 Mar 2022</div>
<div class="t" style="left:779.8px;top:790.95px;font-size:13px;line-height:13px;color:#9aa5b4;letter-spacing:-0.45px;">$72545</div>
<div class="b" style="left:875.2px;top:788.2px;width:102px;height:21.8px;background:#e7f0f8;border-radius:3.5px;"></div>
<div class="t" style="left:875.2px;width:102px;text-align:center;top:794.03px;font-size:10.2px;line-height:10.2px;color:#3a89c6;letter-spacing:0.55px;">Done</div>
<div class="t" style="left:991.5px;top:790.95px;font-size:13px;line-height:13px;color:#9aa5b4;letter-spacing:-0.8px;">GO4YOU</div>
<div class="b" style="left:268px;top:822px;width:830px;height:1px;background:#e4e4e4;border-radius:0px;"></div>
<div class="b" style="left:275.3px;top:829.5px;width:33px;height:33px;background:#cbcbcb;border-radius:3.5px;"></div>
<div class="b" style="left:1139px;top:686.5px;width:426px;height:200px;background:#ffffff;border-radius:5px;box-shadow:0 0 1.5px rgba(40,40,80,0.09);"></div>
<div class="t" style="left:1160.8px;top:709.27px;font-size:16.5px;line-height:16.5px;color:#1f1f1f;letter-spacing:1.1px;-webkit-text-stroke:0.3px #1f1f1f;">Product Status</div>
<div class="b" style="left:1526.40px;top:715.50px;width:3.4px;height:3.4px;border-radius:50%;background:#111"></div>
<div class="b" style="left:1532.30px;top:715.50px;width:3.4px;height:3.4px;border-radius:50%;background:#111"></div>
<div class="b" style="left:1538.20px;top:715.50px;width:3.4px;height:3.4px;border-radius:50%;background:#111"></div>
<svg style="position:absolute;left:0;top:0" width="1600" height="834"><path d="M1302.90,942.02 A100.6,100.6 0 0 1 1368.59,755.48 L1363.30,789.68 A66,66 0 0 0 1320.20,912.06 Z" fill="#1d7bbd"/><path d="M1368.59,755.48 A100.6,100.6 0 0 1 1387.61,949.43 L1375.77,916.92 A66,66 0 0 0 1363.30,789.68 Z" fill="#ee7423"/></svg>
<div class="b" style="left:1588px;top:0px;width:12px;height:834px;background:#f1f1f1;border-radius:0px;"></div>
<div class="b" style="left:1589px;top:0px;width:9px;height:351px;background:#c1c1c1;border-radius:0px;"></div>
<div class="b" style="left:1590.8px;top:825.5px;width:0;height:0;border-left:3px solid transparent;border-right:3px solid transparent;border-top:3.6px solid #4a4a4a"></div>
</body></html>
